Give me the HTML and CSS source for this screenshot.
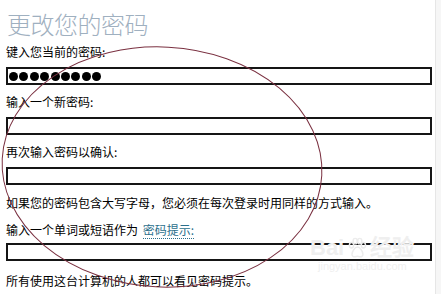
FILE: index.html
```html
<!DOCTYPE html>
<html lang="zh-CN">
<head>
<meta charset="utf-8">
<title>更改您的密码</title>
<link rel="stylesheet" href="styles.css">
</head>
<body>
<div class="page">
  <main class="form">
    <h1 class="title">更改您的密码</h1>
    <div class="field first">
      <div class="label">键入您当前的密码:</div>
      <div class="box dots">
        <span class="dot"></span><span class="dot"></span><span class="dot"></span><span class="dot"></span><span class="dot"></span><span class="dot"></span><span class="dot"></span><span class="dot"></span><span class="dot"></span>
      </div>
    </div>
    <div class="field">
      <div class="label">输入一个新密码:</div>
      <div class="box"></div>
    </div>
    <div class="field">
      <div class="label">再次输入密码以确认:</div>
      <div class="box"></div>
    </div>
    <p class="note">如果您的密码包含大写字母，您必须在每次登录时用同样的方式输入。</p>
    <div class="field hint">
      <div class="label">输入一个单词或短语作为 <span class="link">密码提示:</span></div>
      <div class="box"></div>
    </div>
    <p class="note last">所有使用这台计算机的人都可以看见密码提示。</p>
  </main>
  <div class="strip"></div>
</div>
<div class="watermark">
  <span class="wm-brand">Bai<svg class="paw" viewBox="0 0 24 24" width="22" height="22"><ellipse cx="6" cy="9" rx="2.3" ry="3" fill="none" stroke="#ececec" stroke-width="1.6"/><ellipse cx="10" cy="4.5" rx="2.3" ry="3" fill="none" stroke="#ececec" stroke-width="1.6"/><ellipse cx="15" cy="4.5" rx="2.3" ry="3" fill="none" stroke="#ececec" stroke-width="1.6"/><ellipse cx="19" cy="9" rx="2.3" ry="3" fill="none" stroke="#ececec" stroke-width="1.6"/><path d="M12.5 11c-3 0-6 5-6 8 0 2 2 3 3.5 2.5 1.5-.5 3.5-.5 5 0 1.5.5 3.5-.5 3.5-2.5 0-3-3-8-6-8z" fill="none" stroke="#ececec" stroke-width="1.6"/></svg>经验</span>
  <span class="wm-url">jingyan.baidu.com</span>
</div>
<svg class="circle" width="441" height="294" viewBox="0 0 441 294">
  <ellipse cx="162" cy="167" rx="160" ry="120" transform="rotate(3 162 167)" fill="none" stroke="#7a3040" stroke-width="1"/>
</svg>
</body>
</html>
```
FILE: styles.css
```css
* { box-sizing: border-box; }
html, body { margin: 0; padding: 0; background: #fff; }
body {
  width: 441px;
  height: 294px;
  overflow: hidden;
  position: relative;
  font-family: "Noto Sans CJK SC", "Noto Sans", sans-serif;
  color: #000;
}
.page {
  display: flex;
  height: 294px;
}
.form {
  width: 435px;
  padding: 0 3px 0 6px;
}
.title {
  margin: 10px 0 0 1px;
  font-size: 24px;
  line-height: 28px;
  font-weight: 300;
  color: #9fb0c0;
  letter-spacing: -0.5px;
}
.field { margin-top: 9px; }
.field.first { margin-top: 6px; }
.label {
  font-size: 12px;
  line-height: 16px;
  height: 16px;
  white-space: nowrap;
}
.box {
  margin-top: 7px;
  height: 18px;
  border: 2px solid #151515;
  width: 426px;
}
.dots {
  display: flex;
  align-items: center;
  gap: 1.4px;
  padding-left: 1px;
}
.dot {
  width: 9px;
  height: 9px;
  border-radius: 50%;
  background: #000;
}
.note {
  margin: 10px 0 0;
  font-size: 12px;
  line-height: 16px;
  white-space: nowrap;
}
.hint { margin-top: 11px; }
.hint .box { margin-top: 5px; }
.link {
  color: #2b6f8c;
  border-bottom: 1px dotted #2b6f8c;
  margin-left: 2px;
}
.note.last { margin-top: 12px; }
.strip {
  width: 6px;
  border-left: 1px solid #e6e6e6;
  background: #f6f6f6;
}
.watermark {
  position: absolute;
  left: 310px;
  top: 236px;
  display: flex;
  flex-direction: column;
  align-items: flex-start;
  color: #efefef;
  pointer-events: none;
}
.wm-brand {
  display: flex;
  align-items: center;
  font-family: "Liberation Sans", sans-serif;
  font-size: 22px;
  font-weight: bold;
  line-height: 24px;
}
.wm-brand .paw { margin: 0 2px; }
.wm-url {
  font-family: "Liberation Sans", sans-serif;
  font-size: 11px;
  line-height: 12px;
  margin-left: 8px;
}
.circle {
  position: absolute;
  left: 0;
  top: 0;
  pointer-events: none;
}
```
